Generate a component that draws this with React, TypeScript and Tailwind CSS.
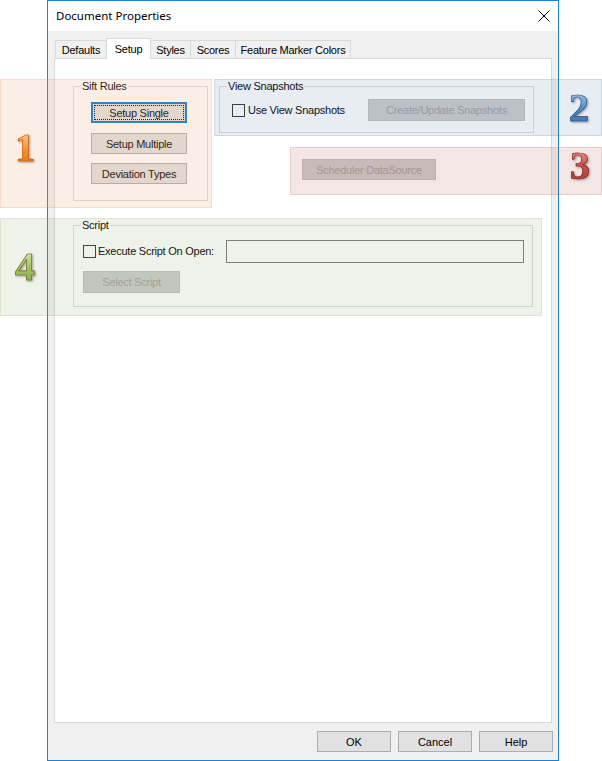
import type { ReactNode } from "react";

function Group({ label, className, children }: { label: string; className: string; children?: ReactNode }) {
  return (
    <div className={`relative border border-[#dcdcdc] ${className}`}>
      <span className="absolute left-[7px] -top-[7px] bg-white px-[1px] leading-[13px]">{label}</span>
      {children}
    </div>
  );
}

function Button({
  children,
  className = "",
  disabled,
  focused,
}: {
  children: ReactNode;
  className?: string;
  disabled?: boolean;
  focused?: boolean;
}) {
  if (disabled) {
    return (
      <div className={`flex items-center justify-center pt-[1px] bg-[#cccccc] border border-[#bfbfbf] text-[#a0a0a0] ${className}`}>
        {children}
      </div>
    );
  }
  if (focused) {
    return (
      <div className={`relative flex items-center justify-center pt-[1px] bg-[#e1e1e1] border-2 border-[#0078d7] ${className}`}>
        <span className="absolute inset-[1px] border border-dotted border-black" />
        {children}
      </div>
    );
  }
  return (
    <div className={`flex items-center justify-center pt-[1px] bg-[#e1e1e1] border border-[#adadad] ${className}`}>
      {children}
    </div>
  );
}

function Checkbox() {
  return <div className="w-[13px] h-[13px] shrink-0 border border-[#333333] bg-white" />;
}

export default function App() {
  return (
    <div className="relative w-[602px] h-[761px] bg-white overflow-hidden font-['Liberation_Sans',Arial,sans-serif] text-[11px] tracking-[-0.25px] text-black">
      {/* Dialog window */}
      <div className="ml-[47px] w-[512px] h-[761px] border border-[#1883d7] bg-[#f0f0f0] flex flex-col">
        {/* Title bar */}
        <div className="h-[30px] shrink-0 bg-white flex items-center justify-between px-[8px]">
          <span className="font-['Noto_Sans',sans-serif] text-[11.5px] tracking-normal">Document Properties</span>
          <svg width="12" height="12" viewBox="0 0 12 12">
            <path d="M0.5 0.5L11.5 11.5M11.5 0.5L0.5 11.5" stroke="#000" strokeWidth="1" fill="none" />
          </svg>
        </div>

        <div className="flex-1 flex flex-col px-[6px] pt-[7px]">
          {/* Tabs */}
          <div className="h-[20px] flex items-end pl-[1px]">
            <div className="w-[51px] h-[18px] border-l border-t border-[#d9d9d9] flex items-center justify-center pt-[1px]">Defaults</div>
            <div className="relative z-10 -mb-[1px] w-[45px] h-[21px] border-l border-t border-r border-[#d9d9d9] bg-white flex justify-center pt-[2px]">Setup</div>
            <div className="w-[40px] h-[18px] border-t border-r border-[#d9d9d9] flex items-center justify-center pt-[1px]">Styles</div>
            <div className="w-[45px] h-[18px] border-t border-r border-[#d9d9d9] flex items-center justify-center pt-[1px]">Scores</div>
            <div className="w-[115px] h-[18px] border-t border-r border-[#d9d9d9] flex items-center justify-center pt-[1px]">Feature Marker Colors</div>
          </div>

          {/* Tab page */}
          <div className="h-[665px] border border-[#d9d9d9] bg-white pl-[18px] pt-[27px]">
            <div className="flex items-start">
              <Group label="Sift Rules" className="w-[135px] h-[115px] flex flex-col pl-[17px] pt-[15px]">
                <Button focused className="w-[96px] h-[21px]">Setup Single</Button>
                <Button className="w-[96px] h-[21px] mt-[10px]">Setup Multiple</Button>
                <Button className="w-[96px] h-[21px] mt-[9px]">Deviation Types</Button>
              </Group>

              <div className="ml-[11px] flex flex-col">
                <Group label="View Snapshots" className="w-[315px] h-[47px] flex items-center pl-[12px] pr-[8px]">
                  <div className="mt-[2px]">
                    <Checkbox />
                  </div>
                  <span className="ml-[3px] mt-[1px]">Use View Snapshots</span>
                  <Button disabled className="ml-auto w-[157px] h-[22px]">Create/Update Snapshots</Button>
                </Group>
                <Button disabled className="ml-[83px] mt-[26px] w-[134px] h-[21px]">Scheduler DataSource</Button>
              </div>
            </div>

            <Group label="Script" className="mt-[24px] w-[460px] h-[82px] pl-[9px] pr-[8px] pt-[14px]">
              <div className="flex items-center h-[23px]">
                <Checkbox />
                <span className="ml-[2px]">Execute Script On Open:</span>
                <div className="ml-auto w-[298px] h-[23px] border border-[#7a7a7a] bg-white" />
              </div>
              <Button disabled className="mt-[8px] w-[97px] h-[22px]">Select Script</Button>
            </Group>
          </div>

          {/* Dialog buttons */}
          <div className="mt-[8px] -mr-[1px] flex justify-end gap-[7px] tracking-normal">
            <Button className="w-[74px] h-[21px]">OK</Button>
            <Button className="w-[74px] h-[21px]">Cancel</Button>
            <Button className="w-[74px] h-[21px]">Help</Button>
          </div>
        </div>
      </div>

      {/* Annotation overlays */}
      <div className="absolute left-0 top-[79px] w-[212px] h-[129px] bg-[rgba(235,170,120,0.2)] border border-[rgba(235,160,110,0.22)] flex items-center pl-[14px] pt-[9px]">
        <span className="font-['Liberation_Serif',serif] font-bold text-[40px] leading-none tracking-normal bg-linear-to-b from-[#ffd9a8] via-[#f8962c] to-[#e8740e] bg-clip-text text-transparent [-webkit-text-stroke:0.7px_#c05a10] drop-shadow-[1px_1px_1px_rgba(0,0,0,0.35)]">
          1
        </span>
      </div>

      <div className="absolute left-[214px] top-[79px] right-0 h-[57px] bg-[rgba(102,128,175,0.15)] border border-[rgba(102,128,175,0.2)] flex items-center justify-end pr-[12px]">
        <span className="font-['Liberation_Serif',serif] font-bold text-[40px] leading-none tracking-normal bg-linear-to-b from-[#b8d4f0] via-[#5b8cc6] to-[#3a6aa8] bg-clip-text text-transparent [-webkit-text-stroke:0.7px_#2c5a8c] drop-shadow-[1px_1px_1px_rgba(0,0,0,0.35)]">
          2
        </span>
      </div>

      <div className="absolute left-[290px] top-[147px] right-0 h-[48px] bg-[rgba(188,88,88,0.15)] border border-[rgba(188,88,88,0.18)] flex items-center justify-end pr-[11px] pb-[11px]">
        <span className="font-['Liberation_Serif',serif] font-bold text-[40px] leading-none tracking-normal bg-linear-to-b from-[#eba09e] via-[#c4524f] to-[#a33a37] bg-clip-text text-transparent [-webkit-text-stroke:0.7px_#8b2a28] drop-shadow-[1px_1px_1px_rgba(0,0,0,0.35)]">
          3
        </span>
      </div>

      <div className="absolute left-0 top-[218px] w-[542px] h-[98px] bg-[rgba(148,168,102,0.15)] border border-[rgba(148,168,102,0.18)] flex items-center pl-[14px]">
        <span className="font-['Liberation_Serif',serif] font-bold text-[40px] leading-none tracking-normal bg-linear-to-b from-[#e2eec0] via-[#a4c263] to-[#84a445] bg-clip-text text-transparent [-webkit-text-stroke:0.7px_#7a6a30] drop-shadow-[1px_1px_1px_rgba(0,0,0,0.35)]">
          4
        </span>
      </div>
    </div>
  );
}
